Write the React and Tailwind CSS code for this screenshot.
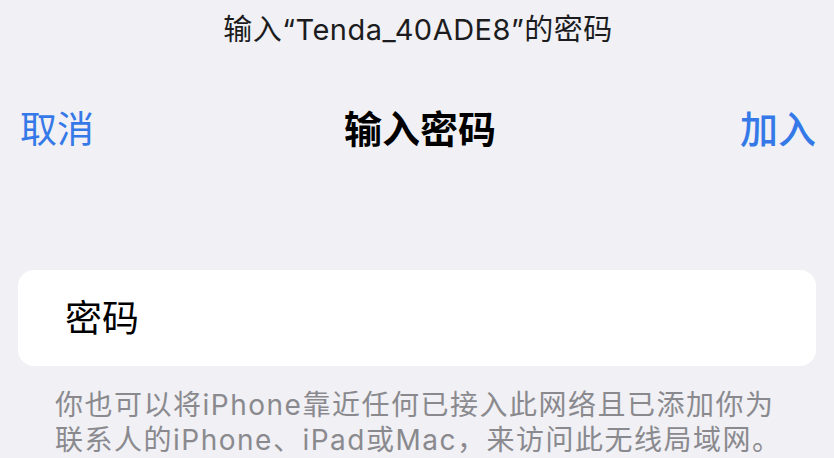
import React from "react";

const font = { fontFamily: 'Inter, "Noto Sans CJK SC", sans-serif' };

export default function App() {
  return (
    <div
      className="w-[834px] h-[458px] overflow-hidden bg-[#f0f0f5] text-black"
      style={font}
    >
      {/* 顶部提示 */}
      <div className="h-[58px] flex items-center justify-center pl-[2px] text-[29px] tracking-[0.5px] leading-none text-[#1c1c1e]">
        输入“Tenda_40ADE8”的密码
      </div>

      {/* 导航栏 */}
      <div className="mt-[42px] h-[58px] px-[18px] flex items-center justify-between">
        <button type="button" className="text-[37px] leading-none text-[#3579e8] pl-[2px]">
          取消
        </button>
        <h1 className="text-[38px] leading-none font-bold pl-[6px]">输入密码</h1>
        <button type="button" className="text-[38px] leading-none font-medium text-[#3579e8]">
          加入
        </button>
      </div>

      {/* 密码输入 */}
      <div className="mt-[112px] mx-[18px] h-[96px] rounded-[16px] bg-white flex items-center px-[47px]">
        <span className="text-[37px] leading-none">密码</span>
      </div>

      {/* 说明 */}
      <div className="mt-[22px] pl-[55px] text-[28px] tracking-[1.5px] leading-[35px] text-[#8a8a8e]">
        <p className="whitespace-nowrap">你也可以将iPhone靠近任何已接入此网络且已添加你为</p>
        <p className="whitespace-nowrap">联系人的iPhone、iPad或Mac，来访问此无线局域网。</p>
      </div>
    </div>
  );
}
